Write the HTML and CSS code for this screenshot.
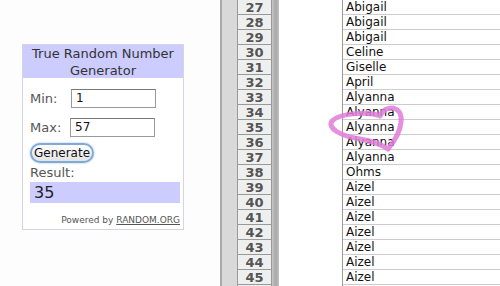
FILE: index.html
```html
<!DOCTYPE html>
<html lang="en">
<head>
    <meta charset="UTF-8">
    <title>True Random Number Generator</title>
    <link rel="stylesheet" href="styles.css">
</head>
<body>
    <div class="page">
        <!-- left side: the generator widget -->
        <div class="left-pane">
            <div class="rng-box">
                <div class="rng-head">True Random Number<br>Generator</div>
                <div class="rng-body">
                    <div class="field-row">
                        <span class="field-label">Min:</span>
                        <span class="field-input">1</span>
                    </div>
                    <div class="field-row">
                        <span class="field-label">Max:</span>
                        <span class="field-input max">57</span>
                    </div>
                    <button class="gen-btn">Generate</button>
                    <div class="result-label">Result:</div>
                    <div class="result-value">35</div>
                    <div class="powered">Powered by <u>RANDOM.ORG</u></div>
                </div>
            </div>
        </div>

        <!-- right side: spreadsheet -->
        <div class="sheet">
            <div class="frame"></div>
            <div class="row-heads" id="rowHeads"></div>
            <div class="divider"></div>
            <div class="gap"></div>
            <div class="names" id="names"></div>
        </div>

        <svg class="heart" width="100" height="60" viewBox="0 0 100 60">
            <path d="M60 21 C65 9 83 10 81 27 C80 39 73 48 68 54 M60 21 C50 16 19 18 12 26 C7 33 20 41 40 44 C52 46 62 50 68 54"
                  fill="none" stroke="#e07cd8" stroke-width="5" stroke-linecap="round" stroke-opacity="0.85"/>
        </svg>
    </div>

    <script>
        // names from row 27 to 45
        var names = ["Abigail", "Abigail", "Abigail", "Celine", "Giselle", "April",
            "Alyanna", "Alyanna", "Alyanna", "Alyanna", "Alyanna", "Ohms",
            "Aizel", "Aizel", "Aizel", "Aizel", "Aizel", "Aizel", "Aizel"];

        var heads = document.getElementById("rowHeads");
        var list = document.getElementById("names");

        for (var i = 0; i < names.length; i++) {
            var h = document.createElement("div");
            h.className = "row-head";
            h.textContent = 27 + i;
            heads.appendChild(h);

            var c = document.createElement("div");
            c.className = "name-cell";
            c.textContent = names[i];
            list.appendChild(c);
        }
    </script>
</body>
</html>
```

FILE: styles.css
```css
body {
    margin: 0;
    padding: 0;
    background-color: #fff;
    font-family: 'DejaVu Sans', Verdana, sans-serif;
}

.page {
    position: relative;
    display: flex;
    width: 500px;
    height: 286px;
    overflow: hidden;
}

.left-pane {
    width: 220px;
    flex-shrink: 0;
    background-color: #fdfdfd;
}

.rng-box {
    margin: 44px 0 0 22px;
    width: 160px;
    height: 184px;
    border: 1px solid #d4d4e4;
    background-color: #fff;
}

.rng-head {
    background-color: #ccccff;
    color: #333;
    font-size: 13px;
    line-height: 17px;
    text-align: center;
    height: 33px;
}

.rng-body {
    padding: 11px 3px 0 7px;
}

.field-row {
    display: flex;
    align-items: center;
    height: 19px;
    margin-bottom: 10px;
}

.field-label {
    width: 41px;
    font-size: 13px;
    color: #555;
}

.field-input {
    width: 79px;
    height: 17px;
    border: 1px solid #999;
    border-top-color: #777;
    font-size: 12px;
    line-height: 17px;
    padding-left: 4px;
    color: #111;
}

.field-input.max {
    margin-left: -1px;
}

.gen-btn {
    display: block;
    margin: -4px 0 0 0;
    height: 20px;
    width: 64px;
    padding: 0;
    border: 2px solid #7fa9d6;
    border-radius: 10px;
    background: linear-gradient(#ffffff, #e4e4e4);
    font-family: 'DejaVu Sans', Verdana, sans-serif;
    font-size: 12px;
    color: #111;
    box-shadow: 0 0 2px #8fb6e0;
}

.result-label {
    font-size: 13px;
    color: #555;
    margin-top: 2px;
    line-height: 16px;
}

.result-value {
    background-color: #ccccff;
    font-size: 16px;
    color: #222;
    height: 21px;
    line-height: 21px;
    padding-left: 4px;
    margin-top: 1px;
}

.powered {
    font-size: 9px;
    color: #555;
    text-align: right;
    margin-top: 12px;
}

.sheet {
    display: flex;
    flex: 1;
}

.frame {
    width: 15px;
    border-left: 2px solid #aaa;
    background-color: #d9d9d9;
}

.row-heads {
    width: 33px;
    border-left: 1px solid #999;
    border-right: 1px solid #999;
    background-color: #eef0f0;
}

.row-head {
    height: 14px;
    border-bottom: 1px solid #999;
    font-size: 13px;
    font-weight: bold;
    color: #555;
    text-align: center;
    line-height: 15px;
}

.divider {
    width: 7px;
    background: linear-gradient(to right, #c8c8c8, #a9a9a9, #c0c0c0);
}

.gap {
    width: 63px;
    background-color: #fff;
}

.names {
    flex: 1;
    border-left: 1px solid #999;
}

.name-cell {
    height: 14px;
    border-bottom: 1px solid #ccc;
    font-size: 12px;
    line-height: 15px;
    padding-left: 3px;
    color: #111;
}

.heart {
    position: absolute;
    left: 320px;
    top: 95px;
}
```
